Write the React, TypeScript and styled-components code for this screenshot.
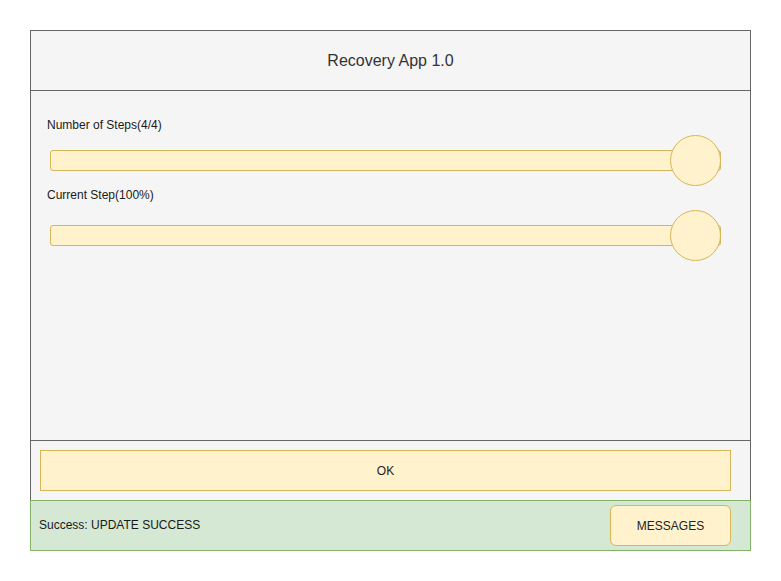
import React from "react";
import styled, { createGlobalStyle } from "styled-components";

const Global = createGlobalStyle`
  html, body { margin: 0; padding: 0; background: #ffffff; }
  body { font-family: "Liberation Sans", Arial, Helvetica, sans-serif; }
  * { box-sizing: border-box; }
`;

const Page = styled.div`
  padding: 30px 0 0 30px;
  width: 781px;
  height: 581px;
`;

const Frame = styled.div`
  width: 721px;
  display: flex;
  flex-direction: column;
`;

const Panel = styled.div`
  background: #f5f5f5;
  border: 1px solid #666666;
  border-bottom: none;
  display: flex;
  flex-direction: column;
`;

const Header = styled.div`
  height: 60px;
  border-bottom: 1px solid #666666;
  display: flex;
  align-items: center;
  justify-content: center;
  font-size: 16px;
  color: #333333;
`;

const Body = styled.div`
  height: 350px;
  border-bottom: 1px solid #666666;
  padding: 27px 0 0 0;
  display: flex;
  flex-direction: column;
`;

const Label = styled.div<{ $gap: number }>`
  font-size: 12px;
  line-height: 14px;
  color: #1a1a1a;
  padding-left: 16px;
  margin-top: ${(p) => p.$gap}px;
`;

const Slider = styled.div<{ $gap: number }>`
  position: relative;
  margin-left: 19px;
  margin-top: ${(p) => p.$gap}px;
  width: 671px;
  height: 51px;
`;

const Track = styled.div`
  margin-top: 15px;
  height: 21px;
  width: 100%;
  background: #fff2cc;
  border: 1px solid #d6b656;
  border-radius: 3px;
`;

const Knob = styled.div`
  position: absolute;
  right: 0;
  top: 0;
  width: 51px;
  height: 51px;
  border-radius: 50%;
  background: #fff2cc;
  border: 1px solid #d6b656;
`;

const ActionRow = styled.div`
  height: 59px;
  padding: 9px 19px 9px 9px;
  display: flex;
`;

const OkButton = styled.div`
  flex: 1;
  height: 41px;
  background: #fff2cc;
  border: 1px solid #d6b656;
  display: flex;
  align-items: center;
  justify-content: center;
  font-size: 12px;
  color: #222222;
`;

const Footer = styled.div`
  height: 51px;
  background: #d5e8d4;
  border: 1px solid #82b366;
  display: flex;
  align-items: center;
  justify-content: space-between;
  padding: 0 19px 0 8px;
`;

const Status = styled.span`
  font-size: 12px;
  line-height: 14px;
  margin-bottom: 2px;
  color: #1a1a1a;
`;

const MsgButton = styled.div`
  width: 121px;
  height: 41px;
  background: #fff2cc;
  border: 1px solid #d6b656;
  border-radius: 6px;
  display: flex;
  align-items: center;
  justify-content: center;
  font-size: 12px;
  color: #222222;
`;

export default function App() {
  return (
    <Page>
      <Global />
      <Frame>
        <Panel>
          <Header>Recovery App 1.0</Header>
          <Body>
            <Label $gap={0}>Number of Steps(4/4)</Label>
            <Slider $gap={3}>
              <Track />
              <Knob />
            </Slider>
            <Label $gap={2}>Current Step(100%)</Label>
            <Slider $gap={8}>
              <Track />
              <Knob />
            </Slider>
          </Body>
          <ActionRow>
            <OkButton>OK</OkButton>
          </ActionRow>
        </Panel>
        <Footer>
          <Status>Success: UPDATE SUCCESS</Status>
          <MsgButton>MESSAGES</MsgButton>
        </Footer>
      </Frame>
    </Page>
  );
}
